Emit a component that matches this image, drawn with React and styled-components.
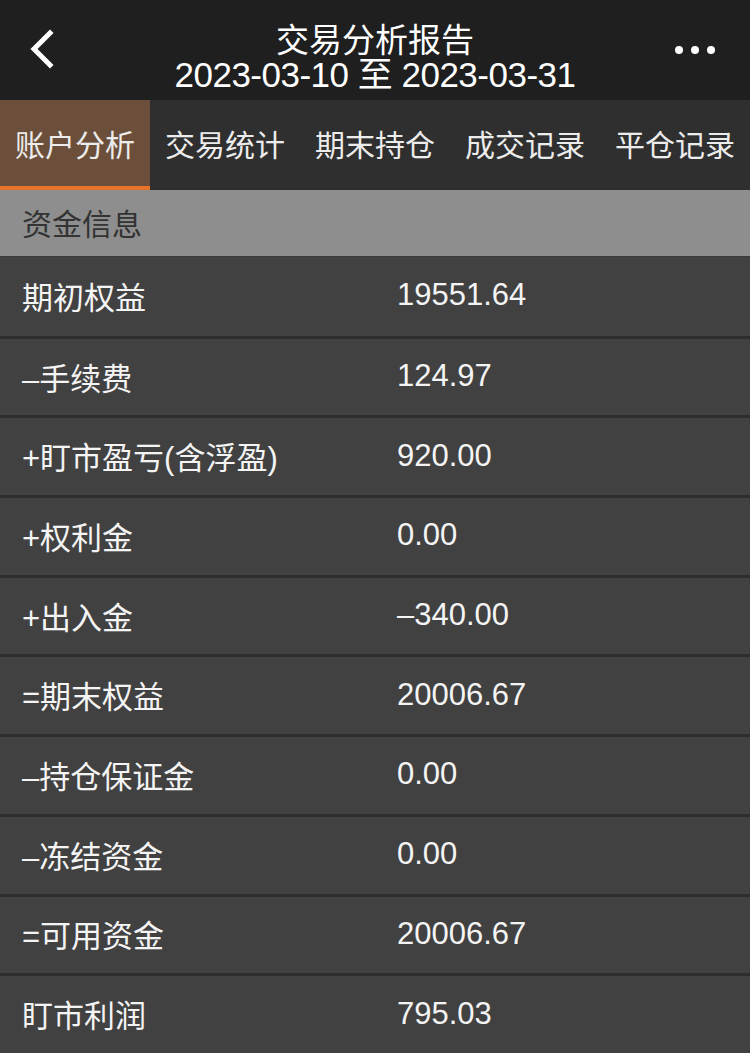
import React from "react";
import styled, { createGlobalStyle } from "styled-components";

const Global = createGlobalStyle`
  html, body { margin: 0; padding: 0; background: #414141; }
  body { font-family: "Liberation Sans", "Noto Sans CJK SC", sans-serif; }
`;

const Page = styled.div`
  width: 750px;
  min-height: 1053px;
  background: #414141;
  overflow: hidden;
`;

const Header = styled.header`
  height: 100px;
  background: #1f1f1f;
  display: grid;
  grid-template-columns: 100px 1fr 100px;
  align-items: center;
`;

const BackBtn = styled.div`
  display: flex;
  align-items: center;
  padding-left: 28px;
  height: 100%;
`;

const MoreBtn = styled.div`
  display: flex;
  justify-content: flex-end;
  align-items: center;
  gap: 8px;
  padding-right: 35px;
  height: 100%;
`;

const Dot = styled.span`
  width: 8px;
  height: 8px;
  border-radius: 50%;
  background: #ffffff;
`;

const TitleBox = styled.div`
  display: flex;
  flex-direction: column;
  align-items: center;
  justify-content: flex-start;
  align-self: stretch;
  color: #ffffff;
  padding-top: 20px;
  box-sizing: border-box;
`;

const Title = styled.div`
  font-size: 33px;
  line-height: 36px;
  height: 36px;
  font-family: "Noto Sans CJK SC", sans-serif;
`;

const SubTitle = styled.div`
  font-size: 35px;
  line-height: 38px;
  height: 38px;
  letter-spacing: -0.5px;
`;

const Tabs = styled.nav`
  display: grid;
  grid-template-columns: repeat(5, 150px);
  height: 90px;
  background: #2f2f2f;
`;

const Tab = styled.div`
  display: flex;
  align-items: center;
  justify-content: center;
  font-size: 30px;
  color: #ececec;
  font-family: "Noto Sans CJK SC", sans-serif;
  background: ${(p) => (p.$active ? "#6c4f3b" : "transparent")};
  border-bottom: 4px solid ${(p) => (p.$active ? "#e8742a" : "transparent")};
  box-sizing: border-box;
`;

const Section = styled.div`
  height: 66px;
  background: #8e8e8e;
  color: #333333;
  font-size: 30px;
  display: flex;
  align-items: center;
  padding-left: 22px;
  padding-bottom: 3px;
  box-sizing: border-box;
  font-family: "Noto Sans CJK SC", sans-serif;
`;

const Row = styled.div`
  height: 79.7px;
  box-sizing: border-box;
  display: grid;
  grid-template-columns: 375px 1fr;
  align-items: center;
  background: #414141;
  border-top: 3px solid #2d2d2d;
  color: #f4f4f4;
  font-size: 31px;
  padding-bottom: 2px;
  &:first-of-type { border-top: 1px solid #3a3a3a; }
`;

const Label = styled.div`
  padding-left: 22px;
  font-family: "Liberation Sans", "Noto Sans CJK SC", sans-serif;
`;

const Value = styled.div`
  padding-left: 22px;
`;

const rows = [
  ["期初权益", "19551.64"],
  ["–手续费", "124.97"],
  ["+盯市盈亏(含浮盈)", "920.00"],
  ["+权利金", "0.00"],
  ["+出入金", "–340.00"],
  ["=期末权益", "20006.67"],
  ["–持仓保证金", "0.00"],
  ["–冻结资金", "0.00"],
  ["=可用资金", "20006.67"],
  ["盯市利润", "795.03"],
];

const tabs = ["账户分析", "交易统计", "期末持仓", "成交记录", "平仓记录"];

export default function App() {
  return (
    <Page>
      <Global />
      <Header>
        <BackBtn>
          <svg width="30" height="44" viewBox="0 0 30 44">
            <path d="M22 5 L6 21 L22 37" fill="none" stroke="#fff" strokeWidth="5" strokeLinecap="square" />
          </svg>
        </BackBtn>
        <TitleBox>
          <Title>交易分析报告</Title>
          <SubTitle>2023-03-10 至 2023-03-31</SubTitle>
        </TitleBox>
        <MoreBtn>
          <Dot />
          <Dot />
          <Dot />
        </MoreBtn>
      </Header>
      <Tabs>
        {tabs.map((t, i) => (
          <Tab key={t} $active={i === 0}>{t}</Tab>
        ))}
      </Tabs>
      <Section>资金信息</Section>
      <div>
        {rows.map(([l, v]) => (
          <Row key={l}>
            <Label>{l}</Label>
            <Value>{v}</Value>
          </Row>
        ))}
      </div>
    </Page>
  );
}
